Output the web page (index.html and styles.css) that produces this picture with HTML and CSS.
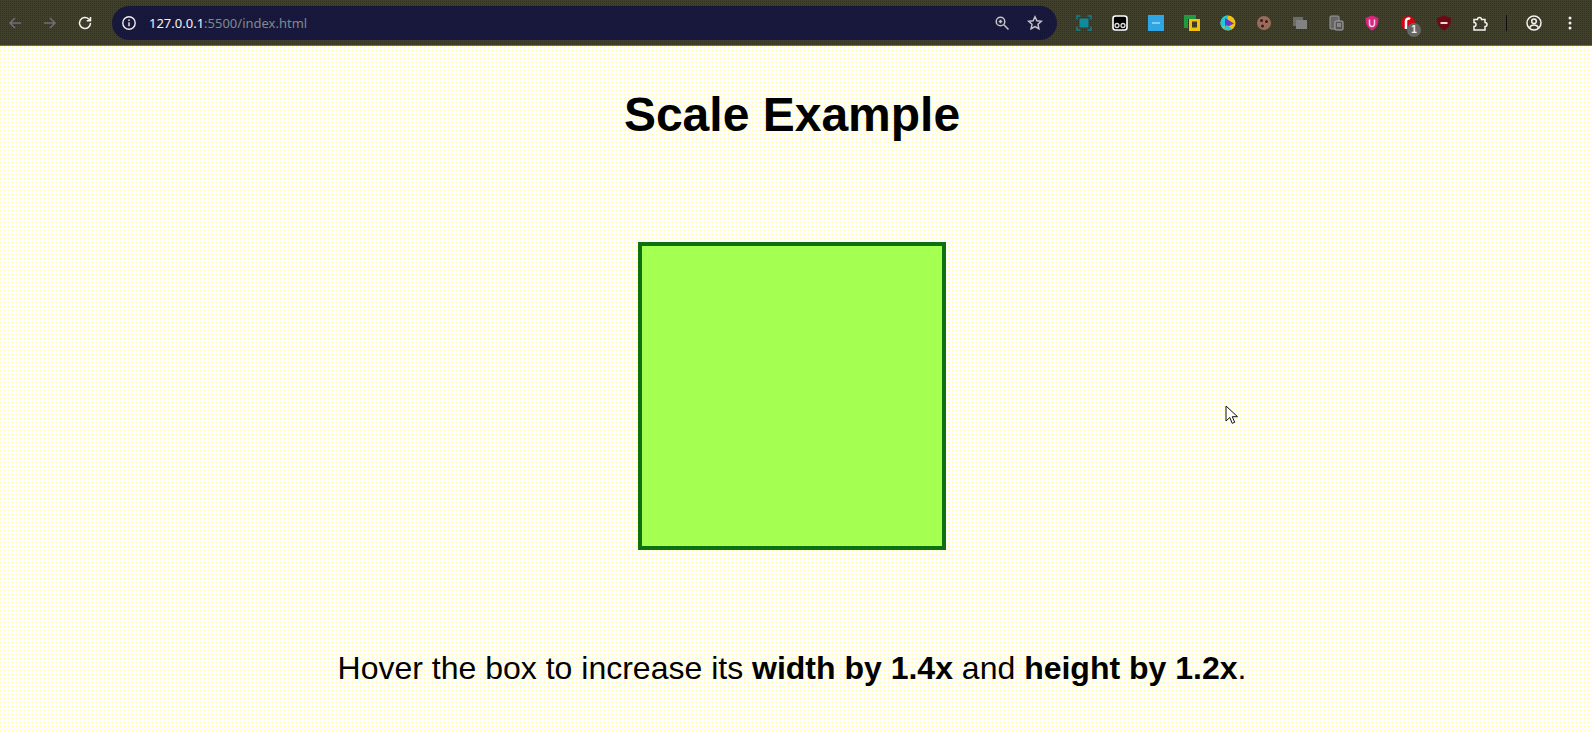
FILE: index.html
```html
<!DOCTYPE html>
<html lang="en">
<head>
    <meta charset="UTF-8">
    <meta name="viewport" content="width=device-width, initial-scale=1.0">
    <title>Scale Example</title>
    <link rel="stylesheet" href="styles.css">
</head>
<body>
    <!-- browser toolbar -->
    <div class="toolbar">
        <div class="nav">
            <svg class="icon dim" viewBox="0 0 16 16"><path d="M14 8H3M8 3L3 8l5 5"/></svg>
            <svg class="icon dim" viewBox="0 0 16 16"><path d="M2 8h11M8 3l5 5-5 5"/></svg>
            <svg class="icon" viewBox="0 0 16 16"><path d="M13.500 8A5.500 5.500 0 1 1 11.800 4L13.500 5.600M13.500 2v3.800H9.700"/></svg>
        </div>
        <div class="address">
            <svg class="info" viewBox="0 0 16 16"><circle cx="8" cy="8" r="6.200"/><path d="M8 7.200v4M8 4.600v1.400"/></svg>
            <span class="url"><span class="host">127.0.0.1</span>:5500/index.html</span>
            <div class="address-end">
                <svg class="icon light" viewBox="0 0 16 16"><circle cx="6.500" cy="6.500" r="4.300"/><path d="M9.800 9.800L14.500 14.500M4.700 6.500h3.600M6.500 4.700v3.600"/></svg>
                <svg class="icon light" viewBox="0 0 16 16"><path d="M8 1.800l1.900 4 4.400.5-3.300 3 .9 4.400L8 11.500l-3.900 2.200.9-4.400-3.300-3 4.400-.5z"/></svg>
            </div>
        </div>
        <div class="extensions">
            <div class="ext">
                <svg viewBox="0 0 16 16"><rect x="3.500" y="3.500" width="9" height="9" fill="#0f8a9e"/><path class="frame" d="M1 4.500V1h3.500M11.500 1H15v3.500M15 11.500V15h-3.500M4.500 15H1v-3.500"/></svg>
            </div>
            <div class="ext">
                <svg viewBox="0 0 16 16"><rect x="1" y="1" width="14" height="14" rx="2.500" fill="#000" stroke="#fff" stroke-width="1.600"/><circle cx="5" cy="10.500" r="2" fill="none" stroke="#ddd" stroke-width="1.300"/><circle cx="11" cy="10.500" r="2" fill="none" stroke="#ddd" stroke-width="1.300"/></svg>
            </div>
            <div class="ext">
                <svg viewBox="0 0 16 16"><rect width="16" height="16" fill="#2ea6e6"/><path d="M4 8h8" stroke="#bfe6fa" stroke-width="1.200"/></svg>
            </div>
            <div class="ext">
                <svg viewBox="0 0 16 16"><path d="M0 0h12v4H4v9H0z" fill="#1f9a3f"/><path d="M5 4h11v12H5zM8 6.500v6h5v-6z" fill="#f4c20d" fill-rule="evenodd"/></svg>
            </div>
            <div class="ext">
                <svg viewBox="0 0 16 16"><circle cx="8" cy="8" r="7.500" fill="#f4c20d"/><path d="M8 .5A7.500 7.500 0 0 0 2 12.500L8 8z" fill="#1ec8e0"/><path d="M5 3l9 5.500L5 13z" fill="#6a35c9"/><path d="M3 12.500A7.500 7.500 0 0 0 12 14.300L7 10z" fill="#1ec8e0"/></svg>
            </div>
            <div class="ext">
                <svg viewBox="0 0 16 16"><circle cx="8" cy="8" r="7" fill="#9c6a5a"/><circle cx="5.500" cy="5.500" r="1.500" fill="#33211c"/><circle cx="10.500" cy="6.500" r="1.500" fill="#33211c"/><circle cx="6.500" cy="11" r="1.500" fill="#33211c"/></svg>
            </div>
            <div class="ext">
                <svg viewBox="0 0 16 16"><rect x="1" y="2" width="10" height="9" fill="#6c6c6c"/><rect x="4" y="5" width="11" height="9" fill="#828282"/></svg>
            </div>
            <div class="ext">
                <svg viewBox="0 0 16 16"><rect x="2" y="1" width="9" height="13" rx="1" fill="#666" stroke="#999"/><rect x="7" y="6" width="8" height="9" rx="1" fill="#555" stroke="#aaa"/><path d="M9 9h4M9 11h4" stroke="#bbb"/></svg>
            </div>
            <div class="ext">
                <svg viewBox="0 0 16 16"><path d="M8 .5l6.500 2.500c0 6-1.500 10-6.500 12.500C3 13 1.500 9 1.500 3z" fill="#d6267e"/><path d="M5.500 4.500v4.500a2.500 2.500 0 0 0 5 0V4.500" fill="none" stroke="#fbd3e6" stroke-width="1.500"/></svg>
            </div>
            <div class="ext">
                <svg viewBox="0 0 16 16"><circle cx="8" cy="8" r="7" fill="#d90012"/><path d="M6 14V6a2.500 2.500 0 0 1 4-2" fill="none" stroke="#fff" stroke-width="2.500"/></svg>
                <span class="badge">1</span>
            </div>
            <div class="ext">
                <svg viewBox="0 0 16 16"><path d="M8 .5l7 2.500c0 6-2 10-7 12.500C3 13 1 9 1 3z" fill="#6b0a12"/><rect x="4.500" y="7" width="7" height="2" fill="#f0d8d8"/></svg>
            </div>
            <div class="ext">
                <svg class="icon" viewBox="0 0 16 16"><path d="M2 4.500h3.500a2 2 0 0 1 4 0H13v3a2 2 0 0 1 0 4V15H2v-3.500a2 2 0 0 0 0-4z"/></svg>
            </div>
            <div class="divider"></div>
            <div class="ext">
                <svg class="icon" viewBox="0 0 16 16"><circle cx="8" cy="8" r="7"/><circle cx="8" cy="6.300" r="2.300"/><path d="M3.500 12.800c1-2 2.500-2.700 4.500-2.700s3.500.7 4.500 2.700"/></svg>
            </div>
            <div class="ext">
                <svg class="dots" viewBox="0 0 16 16"><circle cx="8" cy="3" r="1.500"/><circle cx="8" cy="8" r="1.500"/><circle cx="8" cy="13" r="1.500"/></svg>
            </div>
        </div>
    </div>

    <div class="page">
        <h1>Scale Example</h1>
        <div class="box"></div>
        <p class="hint">Hover the box to increase its <strong>width by 1.4x</strong> and <strong>height by 1.2x</strong>.</p>
        <svg class="cursor" viewBox="0 0 13 20"><path d="M1 1v15l3.800-3.500 2.400 5.800 2.500-1-2.400-5.600H12.500z"/></svg>
    </div>
</body>
</html>
```

FILE: styles.css
```css
html, body {
    margin: 0;
    height: 100%;
    overflow: hidden;
}
body {
    font-family: "Liberation Sans", Arial, sans-serif;
    background-color: #fdfdff;
    color: #000;
}

/* toolbar */
.toolbar {
    display: flex;
    align-items: center;
    height: 45px;
    padding: 0 4px 0 7px;
    border-bottom: 1px solid #6a6a6a;
    background: conic-gradient(at 1px 1px, #40402c 75%, #27276e 0) 0 1px / 2px 2px;
}
.nav {
    display: flex;
    align-items: center;
    gap: 19px;
}
.icon {
    width: 16px;
    height: 16px;
    fill: none;
    stroke: #f2f2f2;
    stroke-width: 1.5;
}
.dim {
    stroke: #6f6f75;
}
.light {
    stroke: #c4c4c8;
}
.address {
    flex: 1;
    display: flex;
    align-items: center;
    height: 34px;
    margin-left: 19px;
    padding: 0 14px 0 9px;
    border-radius: 17px;
    background: conic-gradient(at 1px 1px, #1e1e16 75%, #141438 0) 0 0 / 2px 2px;
}
.info {
    width: 16px;
    height: 16px;
    fill: none;
    stroke: #eee;
    stroke-width: 1.4;
}
.url {
    margin-left: 12px;
    font-family: "Noto Sans", sans-serif;
    font-size: 13px;
    color: #7f8a90;
}
.host {
    color: #f4f4f4;
}
.address-end {
    display: flex;
    align-items: center;
    gap: 17px;
    margin-left: auto;
}
.extensions {
    display: flex;
    align-items: center;
    margin-left: 9px;
}
.ext {
    position: relative;
    display: flex;
    justify-content: center;
    align-items: center;
    width: 36px;
}
.ext svg {
    width: 16px;
    height: 16px;
}
.frame {
    fill: none;
    stroke: #0f7f92;
    stroke-width: 1.5;
}
.badge {
    position: absolute;
    top: 8px;
    left: 17px;
    width: 14px;
    height: 14px;
    border-radius: 7px;
    background-color: #666;
    color: #eee;
    font-size: 10px;
    font-weight: bold;
    line-height: 14px;
    text-align: center;
}
.divider {
    width: 1px;
    height: 16px;
    margin: 0 9px 0 8px;
    background-color: #0a0a0a;
}
.ext .dots {
    fill: #f2f2f2;
}

/* page */
.page {
    position: relative;
    height: 686px;
    padding-right: 8px;
    overflow: hidden;
    text-align: center;
    background: conic-gradient(at 1px 1px, #fdfdff 75%, #fff9a8 0) 0 0 / 4px 4px;
}
h1 {
    margin: 41px 0 0;
    font-size: 48px;
    line-height: 55px;
}
.box {
    width: 300px;
    height: 300px;
    margin: 100px auto 100px;
    border: 4px solid #0d720d;
    background: conic-gradient(at 1px 1px, #8cffa4 75%, #a2ff50 0) 0 0 / 2px 2px;
}
.hint {
    margin: 0;
    font-size: 32px;
    line-height: 37px;
}
.cursor {
    position: absolute;
    left: 1225px;
    top: 359px;
    width: 13px;
    height: 20px;
    fill: #fff;
    stroke: #111;
    stroke-width: 1;
}
```
